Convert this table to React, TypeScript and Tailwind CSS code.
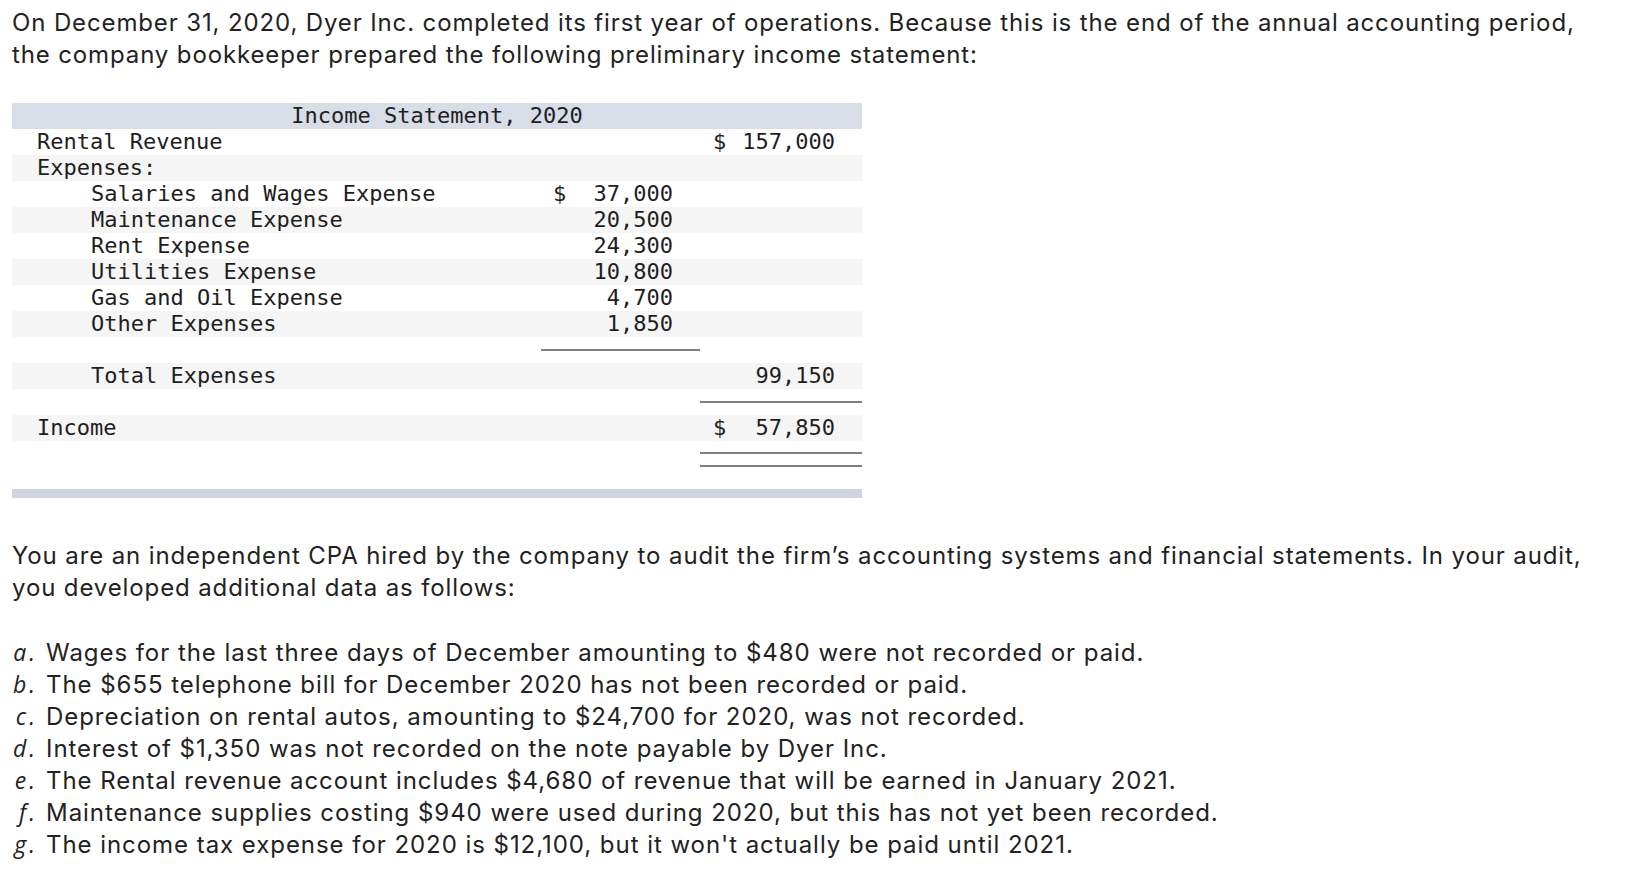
import React from 'react';

type Row = {
  label: string;
  indent?: boolean;
  mid?: string;
  midDollar?: boolean;
  right?: string;
  rightDollar?: boolean;
  stripe?: boolean;
};

const rows: Row[] = [
  { label: 'Rental Revenue', right: '157,000', rightDollar: true },
  { label: 'Expenses:', stripe: true },
  { label: 'Salaries and Wages Expense', indent: true, mid: '37,000', midDollar: true },
  { label: 'Maintenance Expense', indent: true, mid: '20,500', stripe: true },
  { label: 'Rent Expense', indent: true, mid: '24,300' },
  { label: 'Utilities Expense', indent: true, mid: '10,800', stripe: true },
  { label: 'Gas and Oil Expense', indent: true, mid: '4,700' },
  { label: 'Other Expenses', indent: true, mid: '1,850', stripe: true },
];

const notes = [
  ['a.', 'Wages for the last three days of December amounting to $480 were not recorded or paid.'],
  ['b.', 'The $655 telephone bill for December 2020 has not been recorded or paid.'],
  ['c.', 'Depreciation on rental autos, amounting to $24,700 for 2020, was not recorded.'],
  ['d.', 'Interest of $1,350 was not recorded on the note payable by Dyer Inc.'],
  ['e.', 'The Rental revenue account includes $4,680 of revenue that will be earned in January 2021.'],
  ['f.', 'Maintenance supplies costing $940 were used during 2020, but this has not yet been recorded.'],
  ['g.', "The income tax expense for 2020 is $12,100, but it won't actually be paid until 2021."],
];

const Amount = ({ value, dollar, right }: { value?: string; dollar?: boolean; right?: boolean }) => (
  <div className={`flex h-[26px] ${dollar ? 'justify-between' : 'justify-end'} ${right ? 'pl-[13px] pr-[27px]' : 'pl-[12px] pr-[27px]'}`}>
    {dollar && <span>$</span>}
    {value && <span>{value}</span>}
  </div>
);

const StatementRow = ({ row }: { row: Row }) => (
  <div className={`col-span-3 grid grid-cols-[529px_159px_162px] ${row.stripe ? 'bg-[#f5f5f5]' : 'bg-white'}`}>
    <div className={`h-[26px] whitespace-pre ${row.indent ? 'pl-[79px]' : 'pl-[25px]'}`}>{row.label}</div>
    <Amount value={row.mid} dollar={row.midDollar} />
    <Amount value={row.right} dollar={row.rightDollar} right />
  </div>
);

const Rule = ({ col }: { col: 2 | 3 }) => (
  <div className="col-span-3 grid h-[26px] grid-cols-[529px_159px_162px]">
    <div />
    <div className="flex items-center">{col === 2 && <div className="h-[2px] w-full bg-[#808080]" />}</div>
    <div className="flex items-center">{col === 3 && <div className="h-[2px] w-full bg-[#808080]" />}</div>
  </div>
);

export default function App() {
  return (
    <div className="min-h-screen bg-white pl-[12px] pt-[7px] text-[#222] font-['Inter',sans-serif]">
      <p className="whitespace-nowrap text-[24px] leading-[32px] tracking-[0.87px]">
        On December 31, 2020, Dyer Inc. completed its first year of operations. Because this is the end of the annual accounting period,
        <br />
        the company bookkeeper prepared the following preliminary income statement:
      </p>

      <div className="mt-[32px] grid w-[850px] grid-cols-[529px_159px_162px] font-['DejaVu_Sans_Mono',monospace] text-[22px] leading-[26px] text-[#1e1e1e]">
        <div className="col-span-3 h-[26px] bg-[#d8dde7] text-center">Income Statement, 2020</div>
        {rows.map((row) => (
          <StatementRow key={row.label} row={row} />
        ))}
        <Rule col={2} />
        <StatementRow row={{ label: 'Total Expenses', indent: true, right: '99,150', stripe: true }} />
        <Rule col={3} />
        <StatementRow row={{ label: 'Income', right: '57,850', rightDollar: true, stripe: true }} />
        <div className="col-span-3 grid h-[48px] grid-cols-[529px_159px_162px]">
          <div />
          <div />
          <div className="mt-[11px] h-[15px] border-y-2 border-[#808080]" />
        </div>
        <div className="col-span-3 h-[9px] bg-[#cfd5e0]" />
      </div>

      <p className="mt-[42px] whitespace-nowrap text-[24px] leading-[32px] tracking-[0.88px]">
        You are an independent CPA hired by the company to audit the firm’s accounting systems and financial statements. In your audit,
        <br />
        you developed additional data as follows:
      </p>

      <ol className="mt-[33px] flex flex-col text-[24px] leading-[32px] tracking-[0.95px]">
        {notes.map(([letter, text]) => (
          <li key={letter} className="flex h-[32px] items-baseline whitespace-nowrap">
            <span className="w-[26px] text-right font-['Open_Sans',sans-serif] text-[23px] leading-[30px] italic tracking-[3px]">{letter}</span>
            <span className="ml-[8px]">{text}</span>
          </li>
        ))}
      </ol>
    </div>
  );
}
